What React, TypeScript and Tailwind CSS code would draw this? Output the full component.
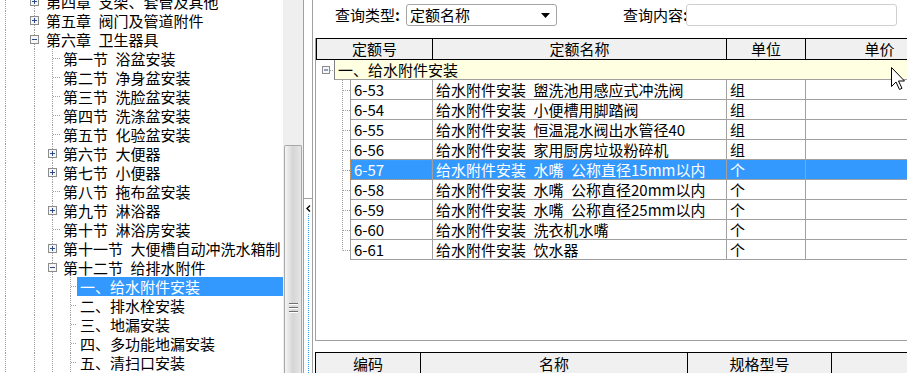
import React from "react";

type TreeNode = {
  text: string;
  level: 1 | 2 | 3;
  box?: "+" | "-";
  selected?: boolean;
};

// \u2002 = en space, close to the half-width gap of the original font
const S = "\u2002";

const treeNodes: TreeNode[] = [
  { text: `第四章${S}支架、套管及其他`, level: 1, box: "+" },
  { text: `第五章${S}阀门及管道附件`, level: 1, box: "+" },
  { text: `第六章${S}卫生器具`, level: 1, box: "-" },
  { text: `第一节${S}浴盆安装`, level: 2 },
  { text: `第二节${S}净身盆安装`, level: 2 },
  { text: `第三节${S}洗脸盆安装`, level: 2 },
  { text: `第四节${S}洗涤盆安装`, level: 2 },
  { text: `第五节${S}化验盆安装`, level: 2 },
  { text: `第六节${S}大便器`, level: 2, box: "+" },
  { text: `第七节${S}小便器`, level: 2, box: "+" },
  { text: `第八节${S}拖布盆安装`, level: 2 },
  { text: `第九节${S}淋浴器`, level: 2, box: "+" },
  { text: `第十节${S}淋浴房安装`, level: 2 },
  { text: `第十一节${S}大便槽自动冲洗水箱制`, level: 2, box: "+" },
  { text: `第十二节${S}给排水附件`, level: 2, box: "-" },
  { text: "一、给水附件安装", level: 3, selected: true },
  { text: "二、排水栓安装", level: 3 },
  { text: "三、地漏安装", level: 3 },
  { text: "四、多功能地漏安装", level: 3 },
  { text: "五、清扫口安装", level: 3 },
];

const rows = [
  { code: "6-53", name: `给水附件安装${S}盥洗池用感应式冲洗阀`, unit: "组" },
  { code: "6-54", name: `给水附件安装${S}小便槽用脚踏阀`, unit: "组" },
  { code: "6-55", name: `给水附件安装${S}恒温混水阀出水管径40`, unit: "组" },
  { code: "6-56", name: `给水附件安装${S}家用厨房垃圾粉碎机`, unit: "组" },
  { code: "6-57", name: `给水附件安装${S}水嘴${S}公称直径15mm以内`, unit: "个", selected: true },
  { code: "6-58", name: `给水附件安装${S}水嘴${S}公称直径20mm以内`, unit: "个" },
  { code: "6-59", name: `给水附件安装${S}水嘴${S}公称直径25mm以内`, unit: "个" },
  { code: "6-60", name: `给水附件安装${S}洗衣机水嘴`, unit: "个" },
  { code: "6-61", name: `给水附件安装${S}饮水器`, unit: "个" },
];

function Dot({ x1, y1, x2, y2 }: { x1: number; y1: number; x2: number; y2: number }) {
  return <line x1={x1} y1={y1} x2={x2} y2={y2} stroke="#a0a0a0" strokeDasharray="1 1" />;
}

function ExpandBox({ x, y, sign, size = 8 }: { x: number; y: number; sign: "+" | "-"; size?: number }) {
  const c = size / 2 + 0.5;
  return (
    <g>
      <rect x={x + 0.5} y={y + 0.5} width={size} height={size} fill="#f6f6f6" stroke="#8c8c8c" />
      <line x1={x + 2} y1={y + c} x2={x + size - 1} y2={y + c} stroke="#2b4a8b" />
      {sign === "+" && <line x1={x + c} y1={y + 2} x2={x + c} y2={y + size - 1} stroke="#2b4a8b" />}
    </g>
  );
}

function TreeRow({ node }: { node: TreeNode }) {
  const w = node.level === 1 ? 43 : node.level === 2 ? 60 : 77;
  return (
    <div className="flex h-[19px]">
      <svg width={w} height={19} className="shrink-0">
        <Dot x1={5.5} y1={0} x2={5.5} y2={19} />
        <Dot x1={34.5} y1={0} x2={34.5} y2={19} />
        {node.level >= 2 && <Dot x1={52.5} y1={0} x2={52.5} y2={19} />}
        {node.level === 3 && <Dot x1={70.5} y1={0} x2={70.5} y2={19} />}
        {node.level === 2 && !node.box && <Dot x1={53} y1={9.5} x2={60} y2={9.5} />}
        {node.level === 3 && <Dot x1={71} y1={9.5} x2={77} y2={9.5} />}
        {node.box && <ExpandBox x={node.level === 1 ? 30 : 48} y={5} sign={node.box} />}
      </svg>
      <span
        className={
          node.selected
            ? "flex-1 whitespace-nowrap bg-[#3399ff] pl-[3px] leading-[19px] text-white"
            : "whitespace-nowrap pl-[3px] leading-[19px]"
        }
      >
        {node.text}
      </span>
    </div>
  );
}

export default function App() {
  return (
    <div className="relative flex h-[373px] w-[907px] overflow-hidden bg-white font-['Noto_Sans_CJK_SC',sans-serif] text-[15px] text-black">
      {/* Left: chapter tree */}
      <div className="w-[283px] shrink-0 overflow-hidden">
        <div className="-mt-[8px]">
          {treeNodes.map((n, i) => (
            <TreeRow key={i} node={n} />
          ))}
        </div>
      </div>

      {/* Tree scrollbar */}
      <div className="flex w-[20px] shrink-0 flex-col bg-[#efefef]">
        <div className="mx-[1px] mt-[145px] flex flex-1 flex-col items-center rounded-t-[2px] border border-b-0 border-[#a9a9a9] bg-linear-to-r from-[#f5f5f5] via-[#d5d5d5] to-[#e6e6e6]">
          <div className="mt-[157px] flex flex-col gap-[2px]">
            <div className="h-[2px] w-[9px] border-t border-b border-t-[#6e6e6e] border-b-white" />
            <div className="h-[2px] w-[9px] border-t border-b border-t-[#6e6e6e] border-b-white" />
            <div className="h-[2px] w-[9px] border-t border-b border-t-[#6e6e6e] border-b-white" />
          </div>
        </div>
      </div>

      {/* Splitter */}
      <div className="flex w-[10px] shrink-0 flex-col border-x border-[#a0a0a0] bg-white">
        <div className="mt-[198px] flex flex-1 flex-col items-center border-t border-[#a0a0a0]">
          <svg width="5" height="7" className="mt-[6px]">
            <path d="M4 0.5 L1 3.5 L4 6.5" stroke="#000" fill="none" strokeWidth="1.4" />
          </svg>
          <div className="mt-[2px] flex-1 border-l border-dotted border-[#3399ff]" />
        </div>
      </div>

      {/* Right: query + grid */}
      <div className="flex min-w-0 flex-1 flex-col overflow-hidden">
        <div className="flex h-[38px] shrink-0 items-start pl-[22px] pt-[4px]">
          <span className="w-[71px] shrink-0 whitespace-nowrap leading-[22px]">
            查询类型<span className="font-bold">:</span>
          </span>
          <div className="flex h-[22px] w-[151px] shrink-0 items-center justify-between rounded-[3px] border border-[#a5a5a5] bg-white pl-[3px] pr-[6px]">
            <span className="leading-[20px]">定额名称</span>
            <svg width="9" height="5">
              <path d="M0 0 H9 L4.5 5 Z" fill="#000" />
            </svg>
          </div>
          <span className="ml-[66px] w-[63px] shrink-0 whitespace-nowrap leading-[22px]">
            查询内容<span className="font-bold">:</span>
          </span>
          <div className="h-[22px] w-[211px] shrink-0 rounded-[3px] border border-[#cfcfcf] bg-white" />
        </div>

        <div className="ml-[2px] h-[303px] shrink-0 overflow-hidden border-b border-l border-[#a0a0a0]">
          <div className="flex h-[22px] border-y border-l border-black bg-[#f0f0f0]">
            <div className="w-[116px] shrink-0 border-r border-black text-center leading-[20px]">定额号</div>
            <div className="w-[294px] shrink-0 border-r border-black text-center leading-[20px]">定额名称</div>
            <div className="w-[79px] shrink-0 border-r border-black text-center leading-[20px]">单位</div>
            <div className="w-[148px] shrink-0 border-r border-black text-center leading-[20px]">单价</div>
          </div>

          <div className="flex h-[20px]">
            <svg width={18} height={20} className="shrink-0">
              <Dot x1={14} y1={10.5} x2={18} y2={10.5} />
              <ExpandBox x={6} y={6} sign="-" size={7} />
            </svg>
            <div className="flex-1 whitespace-nowrap border-b border-l border-b-[#a0a0a0] border-l-[#808080] bg-[#ffffe1] pl-[3px] leading-[19px]">
              一、给水附件安装
            </div>
          </div>

          {rows.map((r, i) => {
            const last = i === rows.length - 1;
            const cell = r.selected
              ? "shrink-0 overflow-hidden whitespace-nowrap border-b border-l border-[#a0a0a0] bg-[#3399ff] pl-[3px] leading-[19px] text-white"
              : "shrink-0 overflow-hidden whitespace-nowrap border-b border-l border-[#a0a0a0] pl-[3px] leading-[19px]";
            return (
              <div key={r.code} className="flex h-[20px]">
                <svg width={34} height={20} className="shrink-0">
                  <Dot x1={26.5} y1={0} x2={26.5} y2={last ? 10.5 : 20} />
                  <Dot x1={27} y1={10.5} x2={34} y2={10.5} />
                </svg>
                <div
                  className={
                    r.selected
                      ? `${cell} w-[82px] outline-1 -outline-offset-1 outline-dotted outline-[#c8813e]`
                      : `${cell} w-[82px]`
                  }
                >
                  {r.code}
                </div>
                <div className={`${cell} w-[294px]`}>{r.name}</div>
                <div className={`${cell} w-[79px]`}>{r.unit}</div>
                <div className={`${cell} w-[148px]`} />
              </div>
            );
          })}
        </div>

        <div className="ml-[2px] mt-[11px] flex h-[22px] shrink-0 border-l border-t border-black bg-[#f0f0f0]">
          <div className="w-[105px] shrink-0 border-r border-black text-center leading-[21px]">编码</div>
          <div className="w-[267px] shrink-0 border-r border-black text-center leading-[21px]">名称</div>
          <div className="w-[144px] shrink-0 border-r border-black text-center leading-[21px]">规格型号</div>
        </div>
      </div>

      {/* Mouse pointer over the grid */}
      <svg width="15" height="25" className="absolute left-[891px] top-[67px]">
        <path
          d="M0.5 0.5 L0.5 19.5 L5 15 L8.5 22.5 L11 21.3 L7.5 14 L13.5 14 Z"
          fill="#fff"
          stroke="#000"
          strokeLinejoin="round"
        />
      </svg>
    </div>
  );
}
